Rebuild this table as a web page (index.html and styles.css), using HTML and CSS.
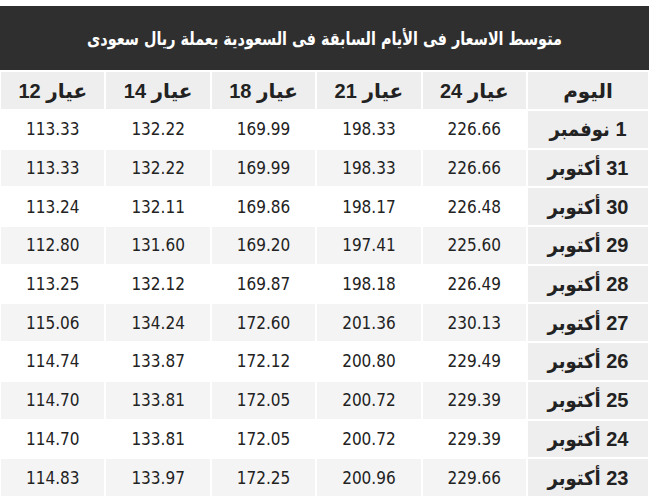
FILE: index.html
```html
<!DOCTYPE html>
<html lang="ar">
<head>
<meta charset="utf-8">
<link rel="stylesheet" href="styles.css">
</head>
<body>
<div class="wrap">
  <div class="band"><h2 class="title" dir="rtl">متوسط الاسعار فى الأيام السابقة فى السعودية بعملة ريال سعودى</h2></div>
  <table class="prices" dir="rtl">
    <thead>
      <tr><th class="day">اليوم</th><th>عيار 24</th><th>عيار 21</th><th>عيار 18</th><th>عيار 14</th><th>عيار 12</th></tr>
    </thead>
    <tbody>
      <tr><td class="day">1 نوفمبر</td><td>226.66</td><td>198.33</td><td>169.99</td><td>132.22</td><td>113.33</td></tr>
      <tr><td class="day">31 أكتوبر</td><td>226.66</td><td>198.33</td><td>169.99</td><td>132.22</td><td>113.33</td></tr>
      <tr><td class="day">30 أكتوبر</td><td>226.48</td><td>198.17</td><td>169.86</td><td>132.11</td><td>113.24</td></tr>
      <tr><td class="day">29 أكتوبر</td><td>225.60</td><td>197.41</td><td>169.20</td><td>131.60</td><td>112.80</td></tr>
      <tr><td class="day">28 أكتوبر</td><td>226.49</td><td>198.18</td><td>169.87</td><td>132.12</td><td>113.25</td></tr>
      <tr><td class="day">27 أكتوبر</td><td>230.13</td><td>201.36</td><td>172.60</td><td>134.24</td><td>115.06</td></tr>
      <tr><td class="day">26 أكتوبر</td><td>229.49</td><td>200.80</td><td>172.12</td><td>133.87</td><td>114.74</td></tr>
      <tr><td class="day">25 أكتوبر</td><td>229.39</td><td>200.72</td><td>172.05</td><td>133.81</td><td>114.70</td></tr>
      <tr><td class="day">24 أكتوبر</td><td>229.39</td><td>200.72</td><td>172.05</td><td>133.81</td><td>114.70</td></tr>
      <tr><td class="day">23 أكتوبر</td><td>229.66</td><td>200.96</td><td>172.25</td><td>133.97</td><td>114.83</td></tr>
    </tbody>
  </table>
</div>
</body>
</html>
```
FILE: styles.css
```css
html, body {
  margin: 0;
  padding: 0;
  background: #ffffff;
}
.wrap {
  width: 649px;
  padding-top: 6px;
}
.band {
  background: #2f2f2f;
  height: 64px;
  display: flex;
  align-items: center;
  justify-content: center;
}
.title {
  margin: 0;
  color: #ffffff;
  font-family: "DejaVu Sans Condensed", "DejaVu Sans", sans-serif;
  font-stretch: condensed;
  font-weight: bold;
  font-size: 16px;
  padding-top: 1px;
  transform: scaleY(1.12);
}
.prices {
  width: 651px;
  margin-left: -1px;
  border-collapse: separate;
  border-spacing: 2px;
  table-layout: fixed;
}
.prices th,
.prices td {
  text-align: center;
  padding: 0;
  height: 36.7px;
  color: #222222;
}
.prices th {
  background: #eeeeee;
  font-family: "Liberation Sans", "DejaVu Sans", sans-serif;
  font-weight: bold;
  font-size: 20px;
  height: 37px;
}
.prices th.day,
.prices td.day {
  width: 120px;
  background: #eeeeee;
  font-family: "Liberation Sans", "DejaVu Sans", sans-serif;
  font-weight: bold;
  font-size: 20px;
}
.prices td {
  font-family: "DejaVu Sans Condensed", "DejaVu Sans", sans-serif;
  font-stretch: condensed;
  font-size: 17px;
  background: #ffffff;
}
.prices tbody tr:nth-child(even) td {
  background: #f4f4f4;
}
.prices tbody tr td.day {
  background: #eeeeee;
}
```
